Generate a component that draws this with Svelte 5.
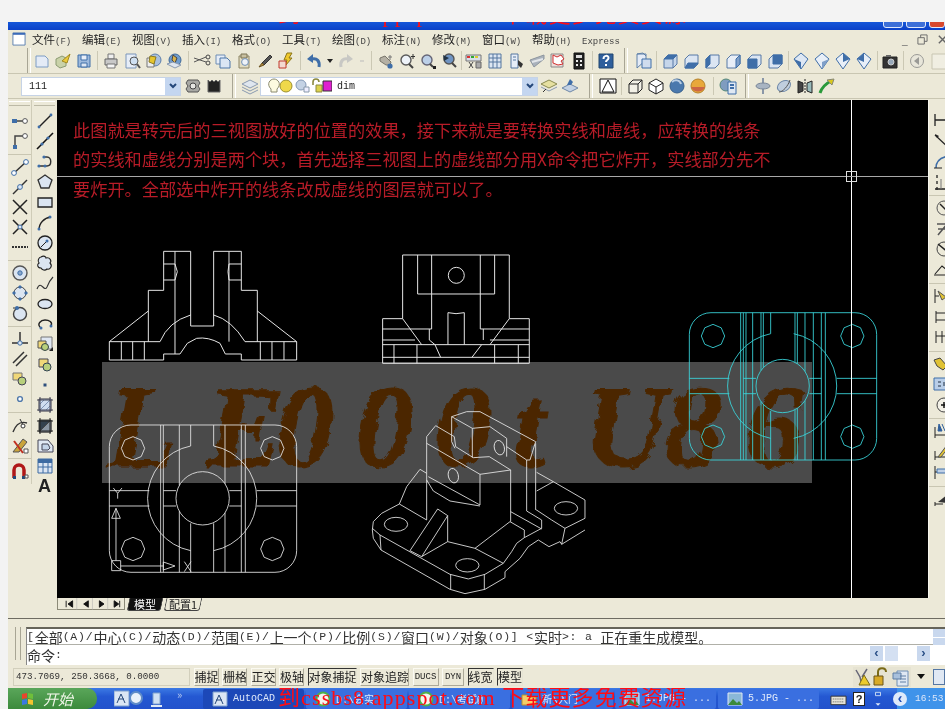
<script>
	// small toolbar glyphs, all on an 18x18 box
	const B = '#3f6ea8';
	const icons = {
		new: `<path d="M3 4h9l3 3v8H3z" fill="#e4ebf6" stroke="#7d9cc4"/>`,
		open: `<path d="M2 7l6-3 4 2v8l-6 2-4-3z" fill="#c9d2a8" stroke="#8b9a72"/><path d="M8 9l8-7-3 9z" fill="#ecc93c" stroke="#a38b22"/>`,
		save: `<path d="M3 3h12v12H3z" fill="#9db9dc" stroke="${B}"/><path d="M6 3h6v5H6z" fill="#e8eef8" stroke="${B}"/><path d="M6 11h6v4H6z" fill="#dde6f2" stroke="${B}"/>`,
		print: `<path d="M6 2h6v5H6z" fill="#eee" stroke="#777"/><path d="M3 7h12v6H3z" fill="#c8c8c8" stroke="#666"/><path d="M5 12h8v4H5z" fill="#f4f4f4" stroke="#777"/>`,
		preview: `<path d="M3 2h10v14H3z" fill="#e6edf7" stroke="#7a95ba"/><circle cx="11" cy="9" r="4" fill="#cfe0f2" stroke="#555"/><path d="M14 12l3 4" stroke="#555" stroke-width="2"/>`,
		plot: `<circle cx="11" cy="8" r="6" fill="#a9bfdc" stroke="#5d7fab"/><path d="M3 6h7v9H3z" fill="#eee" stroke="#777"/><path d="M6 4l6 1-2 7-5-2z" fill="#e6c52e" stroke="#8a7a22"/>`,
		publish: `<circle cx="10" cy="8" r="6" fill="#6f9ccc" stroke="#406a9a"/><path d="M8 3l4 3-2 5-3-3z" fill="#d9b24a"/><path d="M2 12l8 4 6-3-8-3z" fill="#dfe6ef" stroke="#8a9ab0"/>`,
		cut: `<path d="M1 6l12 4M1 10l12-5" stroke="#555"/><circle cx="15" cy="5" r="2" stroke="#444"/><circle cx="15" cy="11" r="2" stroke="#444"/>`,
		copy: `<path d="M2 3h9v9H2z" fill="#e6edf7" stroke="#6f8eb5"/><path d="M6 6h7l3 3v7H6z" fill="#dbe6f4" stroke="#4d76a8"/>`,
		paste: `<path d="M4 4h10v12H4z" fill="#e2dcc2" stroke="#8c8464"/><path d="M6 2h6v4H6z" fill="#c8c0a0" stroke="#7a7252"/><circle cx="10" cy="10" r="3.4" fill="#eef2f8" stroke="#6f8eb5"/>`,
		match: `<path d="M14 3L6 11l2 2 8-8z" fill="#555" stroke="#333"/><path d="M6 11l-3 4 5-2z" fill="#b68d3c" stroke="#6a5220"/>`,
		flash: `<path d="M10 1h5l-3 5h3l-7 8 2-6H7z" fill="#efc82c" stroke="#8a7418"/><path d="M2 9h7v7H2z" fill="#f3d9d0" stroke="#c0392b"/>`,
		undo: `<path d="M14 15c1-6-2-9-7-8" stroke="${B}" stroke-width="3"/><path d="M8 2L2 7l6 4z" fill="${B}" stroke="none"/>`,
		redo: `<path d="M4 15c-1-6 2-9 7-8" stroke="#c8c8c4" stroke-width="3"/><path d="M10 2l6 5-6 4z" fill="#c8c8c4" stroke="none"/>`,
		dd: `<path d="M6 7h6L9 11z" fill="#222" stroke="none"/>`,
		ddg: `<path d="M7 9h4" stroke="#bbb"/>`,
		pan: `<path d="M3 6l5-2 6 6-1 3H9L3 9z" fill="#b4b0a4" stroke="#77746a"/><circle cx="13" cy="14" r="2.6" fill="${B}" stroke="none"/><path d="M13 3v5M11 5h4" stroke="#777"/>`,
		zoomrt: `<circle cx="8" cy="8" r="5" fill="#eef3f9" stroke="#5a5a5a" stroke-width="1.4"/><path d="M11 12l4 4" stroke="#444" stroke-width="2"/><path d="M15 2v5M13 4.500h4" stroke="#333"/>`,
		zoomw: `<circle cx="8" cy="8" r="5" fill="#bcd0e8" stroke="#667" stroke-width="1.4"/><path d="M11 12l3 3" stroke="#444" stroke-width="2"/><path d="M14 14h3v3h-3z" fill="#222" stroke="none"/>`,
		zoomp: `<circle cx="9" cy="7" r="5" fill="#6f94c2" stroke="#555" stroke-width="1.4"/><path d="M12 11l4 4" stroke="#444" stroke-width="2"/><path d="M3 3l6 3-5 3z" fill="#234" stroke="none"/>`,
		props: `<path d="M1 3h15v6H1z" fill="#d9dfe9" stroke="#777"/><path d="M2 4h3v2H2z" fill="#d33" stroke="none"/><path d="M6 4h3v2H6z" fill="#3a3" stroke="none"/><path d="M10 4h3v2h-3z" fill="#dc3" stroke="none"/><path d="M4 10l4 6M8 10l-4 6" stroke="#444"/><path d="M11 10h5v6h-5z" fill="#aaa" stroke="#666"/>`,
		grid: `<path d="M3 2h12v14H3z" fill="#dce6f2" stroke="#55779f"/><path d="M7 2v14M11 2v14M3 6h12M3 10h12" stroke="#55779f"/>`,
		tool: `<path d="M4 2h7v14H4z" fill="#e6edf7" stroke="#55779f"/><path d="M6 5h3M6 8h3" stroke="#55779f"/><path d="M11 8l5 4-2 4-3-3z" fill="#333" stroke="none"/>`,
		sheet: `<path d="M2 8l14-5v4L6 15z" fill="#aab2bc" stroke="#8e969f"/><path d="M4 10l11-3" stroke="#e3e6ea" stroke-width="2"/>`,
		markup: `<path d="M2 2h12v13H2z" fill="#ecdcd8" stroke="#8a8a8a"/><path d="M4 3l4 2 4-2 3 4-3 2 2 3-5 1-5-2z" fill="#fff" stroke="#d03030"/>`,
		calc: `<path d="M4 1h10v16H4z" fill="#222" stroke="#111"/><path d="M6 3h6v3H6z" fill="#ddd" stroke="none"/><path d="M6 8h2v2H6zM10 8h2v2h-2zM6 12h2v2H6zM10 12h2v2h-2z" fill="#eee" stroke="none"/>`,
		help: `<path d="M2 2h14v14H2z" fill="#2f5f9c" stroke="#23476f"/><path d="M6.500 7c0-4 5-4 5-1 0 2-2.500 2-2.500 4M9 12v2" stroke="#fff" stroke-width="2"/>`,
		layout: `<path d="M3 2h9v6l-9 8z" fill="#e4ebf6" stroke="#5f80a8"/><path d="M8 7h9v9H8z" fill="#cfdcee" stroke="#3f6ea8"/><path d="M3 2l6-1 3 3" stroke="#5f80a8"/>`,
		vtop: `<path d="M3 7l4-4h9v9l-4 4H3z" fill="#c6d6ea" stroke="#5779a6"/><path d="M7 3h9L12 7H3z" fill="#3f6ea8" stroke="#3f6ea8"/><path d="M12 7v9" stroke="#5779a6"/>`,
		vbot: `<path d="M3 7l4-4h9v9l-4 4H3z" fill="#dbe5f2" stroke="#5779a6"/><path d="M3 16l3-5h10l-4 5z" fill="#3f6ea8" stroke="#3f6ea8"/>`,
		vleft: `<path d="M3 7l4-4h9v9l-4 4H3z" fill="#dbe5f2" stroke="#5779a6"/><path d="M3 7l4-4v9l-4 4z" fill="#3f6ea8" stroke="#3f6ea8"/>`,
		vright: `<path d="M3 7l4-4h9v9l-4 4H3z" fill="#e8eef7" stroke="#5779a6"/><path d="M12 7l4-4v9l-4 4z" fill="#7f9fc8" stroke="#3f6ea8"/>`,
		vfront: `<path d="M3 7l4-4h9v9l-4 4H3z" fill="#dbe5f2" stroke="#5779a6"/><path d="M3 7h9v9H3z" fill="#3f6ea8" stroke="#3f6ea8"/>`,
		vback: `<path d="M3 7l4-4h9v9l-4 4H3z" fill="#dbe5f2" stroke="#5779a6"/><path d="M7 3h9v9H7z" fill="#3f6ea8" stroke="#3f6ea8"/>`,
		dia1: `<path d="M9 1l7 6-7 10-7-10z" fill="#dde7f4" stroke="#3f6ea8"/><path d="M2 7l7 3v7z" fill="#3f6ea8" stroke="none"/>`,
		dia2: `<path d="M9 1l7 6-7 10-7-10z" fill="#e8eff8" stroke="#3f6ea8"/><path d="M16 7l-7 3v7z" fill="#7f9fc8" stroke="none"/>`,
		dia3: `<path d="M9 1l7 6-7 10-7-10z" fill="#e8eff8" stroke="#3f6ea8"/><path d="M9 1l7 6-7 3z" fill="#3f6ea8" stroke="none"/>`,
		dia4: `<path d="M9 1l7 6-7 10-7-10z" fill="#e8eff8" stroke="#3f6ea8"/><path d="M9 1l-7 6 7 3z" fill="#3f6ea8" stroke="none"/>`,
		cam: `<path d="M2 5h14v11H2z" fill="#333" stroke="#222"/><circle cx="10" cy="10" r="3" fill="#9ab" stroke="#ccc"/><path d="M5 3h5v2H5z" fill="#666" stroke="none"/>`,
		back: `<circle cx="9" cy="9" r="6.500" fill="#e8e6da" stroke="#9a9a96"/><path d="M11 5L6 9l5 4z" fill="#9a9a96" stroke="none"/>`,
		box: `<path d="M3 2h15v15H3z" fill="#f0eee2" stroke="#c8c5b2"/>`,
		ws: `<path d="M4 3h10l2 3-2 3 2 3-2 3H4l-2-3 2-3-2-3z" fill="#a8a8a4" stroke="#555"/><circle cx="9" cy="9" r="3" fill="#e6e6e2" stroke="#444"/>`,
		ws2: `<path d="M3 3l2 2 2-2 2 2 2-2 2 2 2-2v12H3z" fill="#222" stroke="#666"/>`,
		layer: `<path d="M9 3l8 4-8 4-8-4z" fill="#dfe6ef" stroke="#8a9ab0"/><path d="M1 10l8 4 8-4" stroke="#8a9ab0"/><path d="M1 13l8 4 8-4" stroke="#8a9ab0"/>`,
		layer2: `<path d="M9 3l8 4-8 4-8-4z" fill="#e6e0a0" stroke="#8a8a50"/><path d="M1 10l8 4 8-4" stroke="#8a9ab0"/><path d="M3 15l3-3" stroke="#333"/>`,
		layer3: `<path d="M9 7l8 4-8 4-8-4z" fill="#c4d2e4" stroke="#6f88a8"/><path d="M6 8l3-6 3 3-2 3z" fill="#3f6ea8" stroke="none"/>`,
		tri: `<path d="M1 2h16v14H1z" fill="#fff" stroke="#111"/><path d="M9 3L3 15h12z" fill="#fff" stroke="#111"/>`,
		cube: `<path d="M3 7l4-4h9v9l-4 4H3z" fill="#f2f0e6" stroke="#222"/><path d="M3 7h9v9M12 7l4-4" stroke="#222"/>`,
		cubeo: `<path d="M9 2l7 4v7l-7 4-7-4V6z" fill="#fff" stroke="#222"/><path d="M2 6l7 4 7-4M9 10v7" stroke="#222"/>`,
		ball: `<circle cx="9" cy="9" r="7" fill="#4a78ad" stroke="#38618e"/><path d="M4 5c3-3 8-2 9 2" stroke="#b8cde4" stroke-width="2"/>`,
		ball2: `<circle cx="9" cy="9" r="7" fill="#e8a83a" stroke="#b4812a"/><path d="M2 10c3 6 11 6 14 0" fill="#c64" stroke="none"/>`,
		render: `<circle cx="7" cy="8" r="6" fill="#7f9cbf" stroke="#587"/><path d="M9 5h8v12H9z" fill="#dfe8f3" stroke="#3f6ea8"/><path d="M11 8h4M11 11h4" stroke="#3f6ea8" stroke-width="2"/>`,
		orbit: `<path d="M9 1v16M3 9h12" stroke="#8a97a8" stroke-width="2"/><ellipse cx="9" cy="9" rx="7" ry="3" fill="#a8b4c2" stroke="#7a8798"/>`,
		orbit2: `<ellipse cx="9" cy="9" rx="7" ry="5" fill="#c0cede" stroke="#6d87a8" transform="rotate(-30 9 9)"/><path d="M4 15c4 0 9-6 11-12" stroke="#555"/>`,
		mirror: `<path d="M2 4l5 2v8l-5 2z" fill="#444" stroke="#222"/><path d="M16 4l-5 2v8l5 2z" fill="#9bb" stroke="#222"/><path d="M9 2v14" stroke="#222" stroke-dasharray="2 1"/>`,
		walk: `<path d="M3 16c2-6 5-9 11-12" stroke="#2a9a3a" stroke-width="3"/><path d="M10 3l7-1-2 6z" fill="#d8c820" stroke="#887"/>`,

		// snap column
		line1: `<path d="M2 9h12" stroke="#444" stroke-width="1.500"/><path d="M1 7h5v4H1z" fill="${B}" stroke="none"/><circle cx="14" cy="9" r="2.400" fill="#fff" stroke="#555"/>`,
		corner: `<path d="M4 14V4h9" stroke="#444" stroke-width="1.500"/><path d="M2 13h4v4H2z" fill="${B}" stroke="none"/><circle cx="14" cy="4" r="2.400" fill="#fff" stroke="#555"/>`,
		seg: `<path d="M3 15L15 4" stroke="#333" stroke-width="1.500"/><circle cx="3" cy="15" r="2.400" fill="#fff" stroke="${B}"/><circle cx="15" cy="4" r="2.400" fill="#fff" stroke="${B}"/>`,
		seg2: `<path d="M2 16L16 2" stroke="#333" stroke-width="1.500"/><circle cx="9" cy="9" r="2.400" fill="#dde6f2" stroke="${B}"/>`,
		cross: `<path d="M2 2l14 14M16 2L2 16" stroke="#222" stroke-width="1.500"/>`,
		cross2: `<path d="M2 2l14 14M16 2L2 16" stroke="#222" stroke-width="1.500"/><circle cx="9" cy="9" r="2" fill="#dde6f2" stroke="${B}"/>`,
		dash: `<path d="M1 9h16" stroke="#333" stroke-width="2" stroke-dasharray="2 1"/>`,
		ring: `<circle cx="9" cy="9" r="7" fill="#dbe5f1" stroke="#555" stroke-width="1.400"/><circle cx="9" cy="9" r="2.200" fill="#8aa8cc" stroke="${B}"/>`,
		quad: `<circle cx="9" cy="9" r="6" fill="#dbe5f1" stroke="#444"/><path d="M9 1l2 2-2 2-2-2zM9 13l2 2-2 2-2-2zM1 9l2-2 2 2-2 2zM13 9l2-2 2 2-2 2z" fill="${B}" stroke="none"/>`,
		tan: `<circle cx="9" cy="10" r="6.500" fill="#dbe5f1" stroke="#444" stroke-width="1.400"/><path d="M2 4h6" stroke="#333"/><circle cx="6" cy="4" r="2" fill="${B}" stroke="none"/>`,
		perp: `<path d="M1 13h16M9 2v11" stroke="#333" stroke-width="1.500"/><circle cx="9" cy="13" r="2.200" fill="#dbe5f1" stroke="${B}"/>`,
		para: `<path d="M2 13L13 2M5 16L16 5" stroke="#333" stroke-width="1.500"/>`,
		blk: `<path d="M2 3h9v7H2z" fill="#f0d878" stroke="#777"/><circle cx="11" cy="11" r="4" fill="#b8d07c" stroke="#445"/>`,
		pt: `<circle cx="9" cy="9" r="2.400" fill="#fff" stroke="#4f78aa" stroke-width="1.400"/>`,
		near: `<path d="M2 16c3-8 8-11 14-9" stroke="#333" stroke-width="1.400"/><path d="M9 3l4 8" stroke="#333"/><circle cx="12" cy="10" r="2" fill="#fff" stroke="#333"/>`,
		none: `<path d="M2 16L12 3l4 3-8 10z" fill="#c9a43c" stroke="#555"/><path d="M3 5l9 12" stroke="#c03020" stroke-width="2"/><path d="M13 13h4v4h-4z" fill="#fff" stroke="#555"/>`,
		mag: `<path d="M3 16V8a5 5 0 0 1 10 0v8" stroke="#b01818" stroke-width="3.500"/><path d="M2 14h3v3H2zM11 14h3v3h-3z" fill="#234a7a" stroke="none"/><path d="M14 13h3v3h-3z" fill="#fff" stroke="#555"/>`,

		// draw column
		lin: `<path d="M3 15L15 3" stroke="#222" stroke-width="1.400"/><circle cx="3" cy="15" r="1.400" fill="${B}" stroke="none"/><circle cx="15" cy="3" r="1.400" fill="${B}" stroke="none"/>`,
		xlin: `<path d="M1 17L17 1" stroke="#111" stroke-width="1.600"/><circle cx="6" cy="12" r="1.600" fill="${B}" stroke="none"/><circle cx="12" cy="6" r="1.600" fill="${B}" stroke="none"/>`,
		pline: `<path d="M2 13h9c5 0 5-9 0-9H8" stroke="#333" stroke-width="1.400"/><circle cx="3" cy="13" r="1.600" fill="${B}" stroke="none"/><circle cx="9" cy="13" r="1.600" fill="${B}" stroke="none"/><circle cx="8" cy="4" r="1.600" fill="${B}" stroke="none"/>`,
		pgon: `<path d="M9 2l7 5-3 8H5L2 7z" fill="#dbe5f1" stroke="#333" stroke-width="1.300"/>`,
		rect: `<path d="M2 5h14v9H2z" fill="#dbe5f1" stroke="#222" stroke-width="1.300"/>`,
		arc: `<path d="M3 16C3 9 8 4 15 3" stroke="#222" stroke-width="1.400"/><circle cx="3" cy="15" r="1.500" fill="${B}" stroke="none"/><circle cx="14" cy="3" r="1.500" fill="${B}" stroke="none"/>`,
		circ: `<circle cx="9" cy="9" r="7" fill="#dbe5f1" stroke="#222" stroke-width="1.300"/><path d="M5 13l5-5" stroke="#222"/><circle cx="11" cy="7" r="1.500" fill="${B}" stroke="none"/>`,
		cloud: `<path d="M5 3c3-2 5 0 5 1 4-1 6 3 4 5 3 3 0 7-3 6-2 2-5 1-6-1-4 0-4-4-2-5-2-2 0-6 2-6z" fill="#dbe5f1" stroke="#222" stroke-width="1.100"/>`,
		spline: `<path d="M1 14c4-10 7 4 10-2 2-5 4-8 6-10" stroke="#333" stroke-width="1.100"/>`,
		ell: `<ellipse cx="9" cy="9" rx="7" ry="4.500" fill="#dbe5f1" stroke="#222" stroke-width="1.300"/>`,
		ella: `<path d="M5 13C0 9 5 5 9 5s8 2 6 6" stroke="#222" stroke-width="1.400"/><circle cx="5" cy="13" r="1.500" fill="${B}" stroke="none"/><circle cx="15" cy="11" r="1.500" fill="${B}" stroke="none"/>`,
		ins: `<path d="M5 2h11v12H5z" fill="#dfe7f2" stroke="#777"/><path d="M2 6h8v7H2z" fill="#f0d878" stroke="#555"/><circle cx="9" cy="12" r="3.500" fill="#b8d07c" stroke="#344"/><path d="M13 16l4-4v4z" fill="#222" stroke="none"/>`,
		mk: `<path d="M3 3h9v8H3z" fill="#f0d878" stroke="#445"/><circle cx="11" cy="11" r="4" fill="#b8d07c" stroke="#345"/>`,
		dot: `<path d="M7.500 7.500h3v3h-3z" fill="#2e4f7c" stroke="none"/>`,
		hatch: `<path d="M3 3h12v12H3z" fill="#cfdcef" stroke="#334"/><path d="M3 9l6-6M3 15L15 3M9 15l6-6" stroke="#7f93b4"/><path d="M1 4h16M1 14h16M4 1v16M14 1v16" stroke="#445"/>`,
		grad: `<path d="M3 3h12v12H3z" fill="#33414f"/><path d="M3 15L15 3v12z" fill="#8a96a4"/><path d="M1 4h16M1 14h16M4 1v16M14 1v16" stroke="#222"/>`,
		region: `<path d="M2 3h10l5 6v6H2z" fill="#e0e8f3" stroke="#445"/><path d="M6 7h6l2 4-2 2H6z" fill="#c4d4e8" stroke="#445"/>`,
		table: `<path d="M2 2h14v14H2z" fill="#dbe5f3" stroke="#3d6aa2"/><path d="M2 2h14v4H2z" fill="#3d6aa2" stroke="none"/><path d="M2 10h14M7 6v10M12 6v10" stroke="#3d6aa2"/>`,

		// dimension column
		d1: `<path d="M2 3v12M2 9h16" stroke="#222" stroke-width="1.300"/>`,
		d2: `<path d="M2 3l14 13" stroke="#222" stroke-width="1.300"/><path d="M2 2l4 2-2 2zM14 12l3 4-4-1z" fill="#222" stroke="none"/>`,
		d3: `<path d="M3 16C3 9 8 5 16 4" stroke="#3f6ea8" stroke-width="1.600"/><path d="M1 16h8" stroke="#222"/>`,
		d4: `<path d="M4 2v3M4 8v3M4 14v3M2 16h10" stroke="#222" stroke-width="1.300"/><path d="M8 6v10" stroke="#777"/>`,
		d5: `<circle cx="11" cy="9" r="7" stroke="#555"/><path d="M7 5l8 8" stroke="#222" stroke-width="1.500"/>`,
		d6: `<path d="M4 4h10l-9 11M5 9h7" stroke="#555" stroke-width="1.500"/>`,
		d7: `<circle cx="11" cy="9" r="7" stroke="#444"/><path d="M5 4l12 10" stroke="#222" stroke-width="1.500"/>`,
		d8: `<path d="M1 14h16M2 13L9 5l7 6" stroke="#222" stroke-width="1.100"/>`,
		d9: `<path d="M2 2v14M2 9h4" stroke="#222"/><path d="M5 4l8 6-4 3z" fill="#e0c235" stroke="#555"/>`,
		d10: `<path d="M3 3v12M14 3v12M3 5h11M3 12h11" stroke="#222"/>`,
		d11: `<path d="M3 3v12M9 3v12M15 3v12M3 8h14" stroke="#222"/>`,
		d12: `<path d="M1 5l6-2 7 8-4 4-6-4z" fill="#e0c235" stroke="#444"/>`,
		d13: `<path d="M1 3h16v12H1z" fill="#b9cee8" stroke="#3f6ea8"/><path d="M5 7h3M5 11h3M11 7v4" stroke="#234"/>`,
		d14: `<circle cx="11" cy="9" r="7" fill="#f2f0e6" stroke="#444"/><path d="M11 6v6M8 9h6" stroke="#111" stroke-width="1.500"/>`,
		d15: `<path d="M2 5v11M2 13h12" stroke="#222"/><path d="M6 2l3 7H5zM9 2l3 7" stroke="#2f5f9c" fill="#2f5f9c"/>`,
		d16: `<path d="M2 8v9M2 14h12" stroke="#222"/><path d="M5 14L14 2l2 2-8 10z" fill="#e0c235" stroke="#555"/>`,
		d17: `<path d="M2 3v13M2 9h16" stroke="#222"/><path d="M4 6h13v4H4z" fill="#bfd0e6" stroke="#3f6ea8"/>`,
		d18: `<path d="M2 12v4M2 14h8" stroke="#222"/><path d="M5 12l9-7v8z" fill="#333" stroke="none"/>`
	};

	const tb1 = ['s:g8','new','open','save','s:s6','print','preview','plot','publish','s:s7','cut','copy','paste','match','flash','s:s7','undo','dd','redo','ddg','s:s8','pan','zoomrt','zoomw','zoomp','s:s4','props','grid','tool','sheet','markup','calc','s:s6','help','s:g16','layout','s:s6','vtop','vbot','vleft','vright','vfront','vback','s:s5','dia1','dia2','dia3','dia4','s:s5','cam','s:s6','back','box'];
	const tb2a = ['s:g15','layer'];
	const tb2b = ['layer2','layer3','s:g17','tri','s:s6','cube','cubeo','ball','ball2','s:s9','render','s:g14','orbit','orbit2','mirror','walk'];
	const snapBar = [['line1','corner'],['seg','seg2','cross','cross2','dash'],['ring','quad','tan'],['perp','para','blk','pt'],['near','none'],['mag']];
	const drawBar = ['lin','xlin','pline','pgon','rect','arc','circ','cloud','spline','ell','ella','ins','mk','dot','hatch','grad','region','table'];
	const dimBar = [['d1','d2','d3','d4'],['d5','d6','d7','d8'],['d9','d10','d11'],['d12','d13','d14'],['d15','d16','d17'],['d18']];

	const menus = ['文件(F)','编辑(E)','视图(V)','插入(I)','格式(O)','工具(T)','绘图(D)','标注(N)','修改(M)','窗口(W)','帮助(H)','Express'];
	const statusBtns = [
		['捕捉',false,'w24'],['栅格',false,'w24'],['正交',false,'w24'],['极轴',false,'w24'],
		['对象捕捉',true,'w48'],['对象追踪',false,'w48'],['DUCS',false,'w26 latin'],['DYN',false,'w22 latin'],
		['线宽',true,'w26'],['模型',true,'w26']
	];
	const taskBtns = [
		['AutoCAD .','cad','on'],['D:\\会实','globe',''],['D:\\考试@','globe',''],
		['新\\入门','folder',''],['1.JPG - ...','pic',''],['5.JPG - ...','pic','']
	];

	// CJK and latin text run at different sizes in the old UI
	function runs(s) {
		return s.match(/[\u3000-\u9fff]+|[^\u3000-\u9fff]+/g);
	}

	function hole(cx, cy) {
		const pts = [];
		for (let i = 0; i < 8; i++) {
			const a = Math.PI * 2 * i / 8 - Math.PI / 2;
			pts.push((cx + 35 * Math.cos(a)).toFixed(1) + ',' + (cy + 35 * Math.sin(a)).toFixed(1));
		}
		return pts.join(' ');
	}

	// vertical lines of the plan view stop at the bore
	function planLine(x) {
		if (x === 272 || x === 341) return `M${x} 195V258M${x} 490V637`;
		const off = Math.abs(x - 308);
		if (off >= 80) return `M${x} 195V637`;
		const dy = Math.sqrt(6400 - off * off);
		return `M${x} 195V${(415 - dy).toFixed(1)}M${x} ${(415 + dy).toFixed(1)}V637`;
	}

	const whiteLines = [182, 190, 238, 272, 341, 375, 424, 436];
	const cyanLines = [182, 190, 198, 218, 243, 250, 272, 345, 352, 375, 400, 424, 436];
</script>

{#snippet icon(name)}
	<svg class="ic" viewBox="0 0 18 18" aria-hidden="true">{@html icons[name]}</svg>
{/snippet}

{#snippet strip(items)}
	{#each items as it}
		{#if it.startsWith('s:')}
			<div class="sep {it.slice(2)}"></div>
		{:else}
			<div class="cell {it === 'dd' || it === 'ddg' ? 'thin' : ''}">{@render icon(it)}</div>
		{/if}
	{/each}
{/snippet}

{#snippet mixed(text)}
	{#each runs(text) as r}
		<span class={/[\u3000-\u9fff]/.test(r) ? 'zh' : 'en'}>{r}</span>
	{/each}
{/snippet}

{#snippet plan(lines)}
	<path d="M93 195H525A65 65 0 0 1 590 260V572A65 65 0 0 1 525 637H93A65 65 0 0 1 28 572V260A65 65 0 0 1 93 195Z" />
	<path d="M341 258A160 160 0 0 1 341 572M272 572A160 160 0 0 1 272 258" />
	<circle cx="308" cy="415" r="80" />
	<path d="M28 392H148M28 438H148M190 392H228M190 438H228M388 392H424M388 438H424M470 392H590M470 438H590" />
	{#each lines as x}
		<path d={planLine(x)} />
	{/each}
	<polygon points={hole(99, 265)} />
	<polygon points={hole(517, 265)} />
	<polygon points={hole(99, 567)} />
	<polygon points={hole(517, 567)} />
{/snippet}

<div class="page">
	<div class="title">
		<div class="promo top">到cssbs8.appspot.com 下载更多免费资源</div>
		<div class="tbtns"><i></i><i></i><i class="red"></i></div>
	</div>

	<div class="menu">
		<svg class="docico" viewBox="0 0 15 15" aria-hidden="true"><path d="M1 1h13v13H1z" fill="#fff" stroke="#5a7fb0"/><path d="M1 1h13v2H1z" fill="#3a6ab8"/></svg>
		{#each menus as m}
			<div class="mi">{@render mixed(m)}</div>
		{/each}
		<div class="winbtns">
			<span>_</span>
			<svg viewBox="0 0 12 12" aria-hidden="true"><path d="M1 4h7v7H1zM4 4V1h7v7H8" fill="none" stroke="#666"/></svg>
			<svg viewBox="0 0 12 12" aria-hidden="true"><path d="M2 2l8 8M10 2l-8 8" fill="none" stroke="#666" stroke-width="1.500"/></svg>
		</div>
	</div>

	<div class="bar tb1">{@render strip(tb1)}</div>

	<div class="bar tb2">
		<div class="combo c1">
			<span>111</span>
			<div class="drop"><svg viewBox="0 0 10 10" aria-hidden="true"><path d="M2 3l3 3 3-3" fill="none" stroke="#24477a" stroke-width="2"/></svg></div>
		</div>
		<div class="cell">{@render icon('ws')}</div>
		<div class="cell">{@render icon('ws2')}</div>
		{@render strip(tb2a)}
		<div class="combo c2">
			<svg class="lay" viewBox="0 0 66 18" aria-hidden="true">
				<path d="M5 12c-5-5-1-10 3-10s8 5 3 10v3H5z" fill="#fdfbe0" stroke="#8a8a70"/>
				<circle cx="20" cy="9" r="6" fill="#efd84a" stroke="#9c9030"/>
				<circle cx="35" cy="8" r="5" fill="#c4d2e4" stroke="#8398b6"/>
				<path d="M38 10h5v5h-5z" fill="#eef" stroke="#89a"/>
				<path d="M47 8V5c0-4 6-4 6 0" fill="none" stroke="#8c8a40" stroke-width="1.600"/>
				<path d="M50 8h6v7h-6z" fill="#dcd24c" stroke="#8c8a40"/>
				<path d="M57 4h9v10h-9z" fill="#e020d0" stroke="#333"/>
			</svg>
			<span class="dim">dim</span>
			<div class="drop"><svg viewBox="0 0 10 10" aria-hidden="true"><path d="M2 3l3 3 3-3" fill="none" stroke="#24477a" stroke-width="2"/></svg></div>
		</div>
		{@render strip(tb2b)}
	</div>

	<div class="work">
		<div class="side">
			<div class="col snap">
				<div class="grip"></div>
				{#each snapBar as group, i}
					{#if i > 0}<div class="hsep"></div>{/if}
					{#each group as n}
						<div class="vcell">{@render icon(n)}</div>
					{/each}
				{/each}
			</div>
			<div class="col draw">
				<div class="grip"></div>
				{#each drawBar as n}
					<div class="vcell d">{@render icon(n)}</div>
				{/each}
				<div class="vcell d big">A</div>
			</div>
		</div>

		<svg class="canvas" viewBox="57 100 871 498" aria-label="drawing">
			<defs>
				<filter id="flame" x="-5%" y="-10%" width="110%" height="120%">
					<feTurbulence type="fractalNoise" baseFrequency="0.09" numOctaves="2" seed="4" />
					<feDisplacementMap in="SourceGraphic" scale="9" />
				</filter>
			</defs>

			<text class="note" x="73" y="137">此图就是转完后的三视图放好的位置的效果，接下来就是要转换实线和虚线，应转换的线条</text>
			<text class="note" x="73" y="166">的实线和虚线分别是两个块，首先选择三视图上的虚线部分用X命令把它炸开，实线部分先不</text>
			<text class="note" x="73" y="196">要炸开。全部选中炸开的线条改成虚线的图层就可以了。</text>

			<rect class="wm" x="102" y="362" width="710" height="121" />
			<text class="wmtext" filter="url(#flame)" x="106 206 276 356 434 513 584 664 745" y="466">LE000tU86</text>

			<g class="cad" transform="translate(100 240) scale(.3333)">
				<path d="M28 360V305L145 213V151H191V34H272V258H341V34H424V151H472V213L590 305V360H424V342H376L360 310Q325 290 290 295L262 310L240 342H191V360H28" />
				<path d="M28 305H180M435 305H590M145 213V305M472 213V305M64 305V360M98 305V360M133 305V360M481 305V360M516 305V360M552 305V360" />
				<path d="M225 34V342M387 34V305M191 72H225M191 120H225M387 72H424M387 120H424M225 72L232 95L225 120M387 72L384 95L387 120" />
				<path d="M180 305Q205 245 272 225M341 225Q395 240 435 305" />
				<path d="M908 236V45H1228V236H1288V370H848V236H908" />
				<path d="M953 45V162H1184V45M995 45V267M1141 45V267M848 267H995M1141 267H1288M848 300H945M1170 300H1288M848 314H1288M848 352H1288" />
				<path d="M988 267V300M1150 267V300M908 236L965 314M1228 236L1170 314M988 300L1005 314L1022 352M1116 352L1145 314" />
				<path d="M1044 314V218Q1068 224 1093 218V314M882 314V370M951 314V370M1184 314V370M1255 314V370" />
				<circle cx="1069" cy="106" r="24" />
			</g>

			<g class="cad thin" transform="translate(100 360) scale(.3333)">
				{@render plan(whiteLines)}
				<path d="M48 602V445M35 475L48 445L61 475ZM62 618H190M190 606L225 618L190 630ZM35 602H62V632H35ZM40 384L53 400L66 384M53 400V416M253 605L273 635M273 605L253 635" />
			</g>

			<!-- isometric view -->
			<g class="cad thin" transform="translate(365 405) scale(.3333)">
				<path d="M103 297L50 325L25 350L22 375L25 400L48 435L255 553L300 566L360 553L420 518V500L465 460L490 425L520 405L552 425L585 410L590 418L660 375" />
				<path d="M22 370L45 390L255 508L310 522L360 508L415 475L440 440L455 415L478 398" />
				<path d="M45 390L48 435M257 508V553M358 508V553M103 297L185 345" />
				<ellipse cx="93" cy="358" rx="35" ry="21" />
				<ellipse cx="307" cy="481" rx="35" ry="20" />
				<ellipse cx="603" cy="310" rx="35" ry="20" />
				<path d="M135 437L218 312L248 332L170 455L135 437M248 332V410M170 455L248 410L330 430L415 475M330 430L435 350L478 375V398L530 370V345L485 318M437 320L530 372" />
				<path d="M185 345V95L212 62L268 95L272 125L325 158L373 155L437 195V350M185 115L345 208V300M345 208L437 195M185 225L205 258L255 288L345 303M190 215L345 300" />
				<path d="M260 35L322 70V158M260 35V110L270 130M260 35L305 20H345L512 110L495 165H485M322 70L375 65L425 100V155M425 125L485 165V318M512 115V312" />
				<ellipse cx="265" cy="212" rx="15" ry="22" transform="rotate(-15 265 212)" />
				<ellipse cx="403" cy="128" rx="15" ry="22" transform="rotate(-15 403 128)" />
				<path d="M515 202L565 230L660 285V340M515 258L565 230M510 312L560 345L600 370L660 340M600 370L590 418M103 297L125 245L165 193L185 205" />
			</g>

			<g class="cad thin cyan" transform="translate(680 247.700) scale(.3333)">
				{@render plan(cyanLines)}
			</g>

			<path class="cross" d="M851.500 100V598" />
			<path class="crossh" d="M57 176.500H928" />
			<rect class="pick" x="846.500" y="171.500" width="10" height="10" />
		</svg>

		<div class="rbar">
			{#each dimBar as group, i}
				{#if i > 0}<div class="hsep"></div>{/if}
				{#each group as n}
					<div class="rcell">{@render icon(n)}</div>
				{/each}
			{/each}
		</div>
	</div>

	<div class="tabs">
		<div class="nav">
			<svg viewBox="0 0 68 13" aria-hidden="true">
				<path d="M6 3v7M13 3L8 6.500l5 3.500zM30 3l-5 3.500 5 3.500zM42 3l5 3.500-5 3.500zM58 3l5 3.500-5 3.500zM64 3v7" fill="#111" stroke="#111" />
				<path d="M17.500 0v13M34.500 0v13M51 0v13" stroke="#aaa8" />
			</svg>
		</div>
		<div class="tab on">模型</div>
		<div class="tab">配置1</div>
	</div>

	<div class="split"></div>

	<div class="cmd">
		<div class="cgrip"></div>
		<div class="cbox">
			<div class="cline hist">
				{@render mixed('[全部(A)/中心(C)/动态(D)/范围(E)/上一个(P)/比例(S)/窗口(W)/对象(O)] <实时>: a 正在重生成模型。')}
				<div class="vscroll"><i></i><i></i></div>
			</div>
			<div class="cline prompt">
				{@render mixed('命令:')}
				<div class="hscroll">
					<i>‹</i><b></b><em></em><i>›</i>
				</div>
			</div>
		</div>
	</div>

	<div class="status">
		<div class="coords">473.7069, 250.3668, 0.0000</div>
		{#each statusBtns as [label, pressed, w]}
			<div class="sb {w}" class:pressed>{label}</div>
		{/each}
		<div class="tray">
			<svg viewBox="0 0 58 20" aria-hidden="true">
				<path d="M3 3l4 7 2 8M14 2l-5 8" fill="none" stroke="#667" stroke-width="1.500"/>
				<path d="M11 8l6 10H6z" fill="#eccb2c" stroke="#7a6a18"/>
				<path d="M25 9V5c0-5 8-5 8 0" fill="none" stroke="#7a6a18" stroke-width="2"/>
				<path d="M21 9h9v9h-9z" fill="#d8aa28" stroke="#6a5418"/>
				<path d="M44 4h11v15H44z" fill="#dfe8f3" stroke="#6f8eb5"/>
				<path d="M40 6h8v6h-8z" fill="#a8c0dc" stroke="#5f7ea5"/>
				<path d="M47 9h6M47 12h6M47 15h6" stroke="#5f7ea5"/>
			</svg>
			<span class="tri"></span>
			<span class="sq"></span>
		</div>
	</div>

	<div class="taskbar">
		<div class="start">
			<svg viewBox="0 0 16 16" aria-hidden="true">
				<path d="M2 3l5-1v5l-5 1z" fill="#e8452c"/><path d="M8 2l5 1v5l-5-1z" fill="#6fbf3a"/>
				<path d="M2 9l5-1v5l-5 1z" fill="#3a78e0"/><path d="M8 8l5 1v5l-5-1z" fill="#f4c430"/>
			</svg>
			<span>开始</span>
		</div>
		<div class="quick">
			<svg viewBox="0 0 48 18" aria-hidden="true">
				<path d="M0 1h15v15H0z" fill="#dbe6f4" stroke="#7ea0cc"/><path d="M3 13l4-9 4 9M4 9h6" fill="none" stroke="#24477a"/>
				<circle cx="22" cy="8" r="6" fill="#eaf1fa" stroke="#5f8cc8" stroke-width="2"/>
				<path d="M39 3h7v11h-7z" fill="#cfe0f4" stroke="#7ea0cc"/><path d="M37 15h11v2H37z" fill="#dfe9f6"/>
			</svg>
		</div>
		<div class="more">»</div>
		{#each taskBtns as [label, kind, on]}
			<div class="task {on}">
				{#if kind === 'cad'}
					<svg viewBox="0 0 16 16" aria-hidden="true"><path d="M1 1h14v14H1z" fill="#dbe6f4" stroke="#7ea0cc"/><path d="M3 13l4-9 4 9M4 9h6" fill="none" stroke="#24477a"/></svg>
				{:else if kind === 'globe'}
					<svg viewBox="0 0 16 16" aria-hidden="true"><circle cx="8" cy="8" r="6.500" fill="#f2f4ee" stroke="#4fae4a" stroke-width="2"/></svg>
				{:else if kind === 'folder'}
					<svg viewBox="0 0 16 16" aria-hidden="true"><path d="M1 4h5l2 2h7v8H1z" fill="#f2ce6a" stroke="#b78f2c"/></svg>
				{:else}
					<svg viewBox="0 0 16 16" aria-hidden="true"><path d="M1 2h14v12H1z" fill="#8ab8d8" stroke="#dfe8f3"/><path d="M1 14l5-6 4 4 2-2 3 4z" fill="#3c8a3c"/></svg>
				{/if}
				<span>{label}</span>
			</div>
		{/each}
		<div class="systray">
			<svg class="kb" viewBox="0 0 18 14" aria-hidden="true"><path d="M1 4h16v9H1z" fill="#e4e2d6" stroke="#333"/><path d="M3 7h12M3 10h12" stroke="#555" stroke-dasharray="1 1"/></svg>
			<div class="hlp">?</div>
			<svg class="two" viewBox="0 0 12 20" aria-hidden="true"><path d="M3 2h6v4H3z" fill="none" stroke="#dfe9f8"/><path d="M3 15h6l-3 3z" fill="#dfe9f8"/></svg>
			<div class="clock">
				<div class="chev">‹</div>
				<span>16:53</span>
			</div>
		</div>
		<div class="promo bottom">到cssbs8.appspot.com 下载更多免费资源</div>
	</div>
</div>

<style>
	:global(body) {
		margin: 0;
		background: #f3f3f3;
	}

	.page {
		width: 945px;
		height: 709px;
		box-sizing: border-box;
		padding: 22px 0 0 8px;
		display: flex;
		flex-direction: column;
		overflow: hidden;
		background: #f3f3f3;
		font-family: "Noto Sans CJK SC", "Liberation Sans", sans-serif;
		color: #222;
		filter: blur(0.35px);
	}

	/* title bar, mostly cropped away in the shot */
	.title {
		position: relative;
		height: 8px;
		flex: none;
		background: linear-gradient(#1456d8, #0a40c8);
		overflow: hidden;
	}

	.promo {
		position: absolute;
		left: 270px;
		white-space: nowrap;
		font: 22px/22px "Liberation Serif", "Noto Sans CJK SC", serif;
		letter-spacing: 1.1px;
		color: #ff0c14;
	}

	.promo.top {
		bottom: 4px;
	}

	.promo.bottom {
		top: -1px;
	}

	.tbtns {
		position: absolute;
		right: 0;
		top: -12px;
		display: flex;
		gap: 3px;
	}

	.tbtns i {
		width: 18px;
		height: 16px;
		background: #3c6fd8;
		border: 1px solid #dfe8fa;
		border-radius: 3px;
	}

	.tbtns i.red {
		width: 14px;
		background: #d8482c;
	}

	.menu {
		height: 18px;
		flex: none;
		display: flex;
		align-items: center;
		padding-left: 4px;
		background: #ece9d8;
	}

	.docico {
		width: 14px;
		height: 14px;
		margin-right: 6px;
	}

	.mi {
		flex: 0 0 50px;
		white-space: nowrap;
		font-size: 11.5px;
		line-height: 16px;
	}

	.mi .en {
		font: 9px "Liberation Mono", monospace;
		color: #444;
	}

	.winbtns {
		margin-left: auto;
		display: flex;
		align-items: center;
		gap: 9px;
		margin-right: -3px;
		color: #666;
		font-size: 11px;
	}

	.winbtns svg {
		width: 11px;
		height: 11px;
	}

	.bar {
		flex: none;
		display: flex;
		align-items: center;
		background: #ece9d8;
		border-bottom: 1px solid #c9c6b2;
		box-sizing: border-box;
	}

	.tb1 {
		height: 26px;
		padding-left: 15px;
	}

	.tb2 {
		height: 25px;
		padding-left: 13px;
	}

	.cell {
		flex: 0 0 21px;
		min-width: 0;
		height: 22px;
		display: flex;
		align-items: center;
		justify-content: center;
	}

	.cell.thin {
		flex-basis: 11px;
	}

	.ic {
		width: 18px;
		height: 18px;
		flex: none;
		fill: none;
		stroke: #444;
	}

	.sep {
		align-self: stretch;
		position: relative;
		flex: none;
	}

	.sep::after {
		content: "";
		position: absolute;
		left: 50%;
		top: 3px;
		bottom: 3px;
		border-left: 1px solid #cbc8b4;
	}

	.s4 { width: 4px; }
	.s5 { width: 5px; }
	.s6 { width: 6px; }
	.s7 { width: 7px; }
	.s8 { width: 8px; }
	.s9 { width: 9px; }
	.g8 { width: 8px; }
	.g14 { width: 14px; }
	.g15 { width: 15px; }
	.g16 { width: 16px; }
	.g17 { width: 17px; }

	.g8::after,
	.g14::after,
	.g15::after,
	.g16::after,
	.g17::after {
		width: 2px;
		top: 0;
		bottom: 0;
		border-left: 1px solid #a8a594;
		border-right: 1px solid #fff;
	}

	.combo {
		height: 19px;
		flex: none;
		display: flex;
		align-items: center;
		box-sizing: border-box;
		background: #fff;
		border: 1px solid #c6d3e6;
		font: 10px "Liberation Mono", monospace;
		position: relative;
	}

	.c1 {
		width: 160px;
		padding-left: 7px;
		margin-right: 1px;
	}

	.c2 {
		width: 278px;
		padding-left: 5px;
	}

	.lay {
		width: 66px;
		height: 18px;
		flex: none;
	}

	.dim {
		margin-left: 5px;
	}

	.drop {
		position: absolute;
		right: 0;
		top: 0;
		bottom: 0;
		width: 15px;
		display: flex;
		align-items: center;
		justify-content: center;
		background: #c4d6f0;
	}

	.drop svg {
		width: 10px;
		height: 10px;
	}

	.work {
		flex: none;
		height: 499px;
		padding-top: 1px;
		box-sizing: border-box;
		display: flex;
		background: #ece9d8;
	}

	.side {
		flex: 0 0 49px;
		display: flex;
		gap: 1px;
		box-sizing: border-box;
	}

	.col {
		width: 23px;
		display: flex;
		flex-direction: column;
		align-items: center;
	}

	.snap {
		height: 384px;
		border-right: 1px solid #cfccb8;
	}

	.grip {
		align-self: stretch;
		height: 5px;
		flex: none;
		margin: 1px 1px 5px;
		border-top: 1px solid #fff;
		border-bottom: 1px solid #bcb9a6;
		box-sizing: border-box;
	}

	.vcell {
		height: 20px;
		flex: none;
		display: flex;
		align-items: center;
		justify-content: center;
	}

	.vcell.d {
		height: 20.300px;
	}

	.big {
		font: bold 18px "Liberation Sans", sans-serif;
		color: #222;
	}

	.hsep {
		flex: 0 0 6px;
		align-self: stretch;
		position: relative;
	}

	.hsep::after {
		content: "";
		position: absolute;
		left: 0;
		right: 0;
		top: 3px;
		border-top: 1px solid #c9c6b2;
	}

	.canvas {
		flex: 0 0 871px;
		width: 871px;
		height: 498px;
		display: block;
		background: #000;
	}

	.note {
		font-family: "Noto Sans CJK SC", sans-serif;
		font-size: 17.200px;
		fill: #b81c28;
	}

	.wm {
		fill: #4a4a4a;
	}

	.wmtext {
		font: italic bold 116px "Liberation Serif", serif;
		fill: #4c2702;
		stroke: #4c2702;
		stroke-width: 1px;
	}

	.cad {
		fill: none;
		stroke: #e6e6e6;
		stroke-width: 3;
	}

	.cad.thin {
		stroke-width: 2.600;
	}

	.cad.cyan {
		stroke: #3ad6dc;
	}

	.cross {
		stroke: #fff;
		stroke-width: 1;
	}

	.crossh {
		stroke: #a8a8a8;
		stroke-width: 1;
	}

	.pick {
		fill: none;
		stroke: #ddd;
	}

	.rbar {
		flex: 1;
		min-width: 0;
		overflow: hidden;
		padding-top: 10px;
		display: flex;
		flex-direction: column;
		border-left: 1px solid #f7f6ee;
		box-sizing: border-box;
	}

	.rcell {
		height: 20.500px;
		flex: none;
		padding-left: 4px;
		display: flex;
		align-items: center;
	}

	.tabs {
		flex: none;
		height: 14px;
		display: flex;
		padding-left: 49px;
		background: #ece9d8;
	}

	.nav {
		width: 68px;
		height: 12px;
		border: 1px solid #8c8a78;
		border-top: none;
		box-sizing: border-box;
	}

	.nav svg {
		display: block;
		width: 68px;
		height: 12px;
	}

	.tab {
		position: relative;
		height: 13px;
		margin-left: 3px;
		padding: 0 4px;
		font-size: 11px;
		line-height: 12px;
		z-index: 0;
		color: #222;
	}

	.tab::before {
		content: "";
		position: absolute;
		inset: 0;
		z-index: -1;
		border: 1px solid #444;
		border-top: none;
		border-radius: 0 0 3px 3px;
		transform: skewX(-12deg);
	}

	.tab.on {
		color: #fff;
		padding: 0 6px;
	}

	.tab.on::before {
		background: #111;
	}

	.split {
		flex: none;
		height: 15px;
		background: #ece9d8 linear-gradient(#6e6c62, #6e6c62) 0 6px / 100% 1px no-repeat;
	}

	.cmd {
		flex: none;
		height: 38px;
		display: flex;
		padding-left: 7px;
		background: #ece9d8;
	}

	.cgrip {
		width: 4px;
		height: 33px;
		margin-right: 5px;
		border-left: 1px solid #a8a594;
		border-right: 1px solid #a8a594;
	}

	.cbox {
		flex: 1;
		background: #fff;
		border-top: 2px solid #66645a;
		border-left: 1px solid #888;
		box-sizing: border-box;
	}

	.cline {
		position: relative;
		box-sizing: border-box;
		display: flex;
		align-items: center;
		white-space: pre;
		font-size: 14px;
		line-height: 16px;
		color: #333;
	}

	.hist {
		height: 16px;
		border-bottom: 1px solid #b0b0a8;
	}

	.prompt {
		height: 19px;
	}

	.cline .en {
		font: 11.500px "Liberation Mono", monospace;
		letter-spacing: 0.78px;
		white-space: pre;
	}

	.vscroll {
		position: absolute;
		right: 0;
		top: 0;
		width: 12px;
		height: 16px;
		display: flex;
		flex-direction: column;
		gap: 1px;
	}

	.vscroll i {
		flex: 1;
		background: #c9d8ee;
	}

	.hscroll {
		position: absolute;
		right: 15px;
		top: 1px;
		width: 60px;
		height: 15px;
		display: flex;
		gap: 2px;
	}

	.hscroll i {
		width: 13px;
		background: #c9d8ee;
		color: #2a4f86;
		font: bold 13px/13px "Liberation Sans", sans-serif;
		text-align: center;
	}

	.hscroll b {
		width: 13px;
		background: #d4e0f2;
	}

	.hscroll em {
		flex: 1;
	}

	.status {
		flex: none;
		height: 23px;
		display: flex;
		align-items: center;
		gap: 3.500px;
		padding-left: 5px;
		background: #ece9d8;
		font-size: 12px;
	}

	.coords {
		width: 177px;
		height: 18px;
		box-sizing: border-box;
		padding-left: 2px;
		border: 1px solid #d2cfbc;
		font: 9.200px/16px "Liberation Mono", monospace;
		color: #333;
	}

	.sb {
		height: 18px;
		flex: none;
		box-sizing: border-box;
		text-align: center;
		line-height: 16px;
		white-space: nowrap;
		border: 1px solid;
		border-color: #fbfaf2 #aca998 #aca998 #fbfaf2;
		overflow: hidden;
	}

	.sb.pressed {
		border-color: #333 #e6e4d4 #e6e4d4 #333;
	}

	.sb.latin {
		font: 9px/16px "Liberation Mono", monospace;
	}

	.w22 { width: 22px; }
	.w24 { width: 25px; }
	.w26 { width: 26px; }
	.w48 { width: 49px; }

	.tray {
		margin-left: auto;
		display: flex;
		align-items: center;
	}

	.tray svg {
		width: 58px;
		height: 20px;
		background: #e6e3d2;
		margin-right: 6px;
	}

	.tri {
		width: 0;
		height: 0;
		border: 4px solid transparent;
		border-top: 5px solid #111;
		border-bottom: 0;
		margin-right: 8px;
	}

	.sq {
		width: 10px;
		height: 14px;
		border: 1px solid #5577a4;
		background: #e0e8f3;
	}

	.taskbar {
		position: relative;
		flex: none;
		height: 21px;
		display: flex;
		align-items: center;
		background: linear-gradient(#3c7ae4, #2458d2 40%, #2252cc);
		color: #dfe8fa;
		overflow: hidden;
		font-size: 11px;
	}

	.start {
		flex: 0 0 89px;
		height: 21px;
		display: flex;
		align-items: center;
		gap: 7px;
		padding-left: 12px;
		box-sizing: border-box;
		background: linear-gradient(#5aa65a, #3c8a3c);
		border-radius: 0 10px 10px 0;
		color: #f0f6e8;
		font-size: 15px;
		font-style: italic;
		line-height: 20px;
	}

	.start svg {
		width: 16px;
		height: 16px;
		flex: none;
	}

	.quick {
		margin-left: 17px;
		width: 48px;
		height: 18px;
	}

	.quick svg {
		display: block;
		width: 48px;
		height: 18px;
	}

	.more {
		width: 41px;
		padding-left: 15px;
		box-sizing: border-box;
		color: #b8ccf0;
		line-height: 12px;
		align-self: flex-start;
	}

	.task {
		flex: 0 0 101px;
		height: 20px;
		margin-right: 2px;
		box-sizing: border-box;
		padding-left: 9px;
		display: flex;
		align-items: center;
		gap: 5px;
		background: #3a6fe0;
		border-radius: 2px;
		font: 10px "Liberation Mono", "Noto Sans CJK SC", monospace;
		overflow: hidden;
		white-space: nowrap;
	}

	.task.on {
		background: #1c48b8;
	}

	.task svg {
		width: 16px;
		height: 16px;
		flex: none;
	}

	.systray {
		flex: 1;
		min-width: 0;
		display: flex;
		align-items: center;
		padding-left: 9px;
		gap: 6px;
		height: 21px;
	}

	.kb {
		width: 17px;
		height: 14px;
		flex: none;
	}

	.hlp {
		width: 12px;
		height: 14px;
		flex: none;
		background: #fff;
		border: 1px solid #222;
		box-sizing: border-box;
		color: #222;
		text-align: center;
		font: bold 11px/12px "Liberation Sans", sans-serif;
	}

	.two {
		width: 10px;
		height: 18px;
		flex: none;
		margin-left: 2px;
	}

	.clock {
		flex: 1;
		align-self: stretch;
		display: flex;
		align-items: center;
		gap: 8px;
		margin-left: 8px;
		background: #3f93ea;
		font: 9.500px "Liberation Mono", monospace;
		white-space: nowrap;
	}

	.chev {
		width: 14px;
		height: 14px;
		flex: none;
		margin-left: -4px;
		border-radius: 50%;
		background: #dfeafa;
		color: #1f4fb8;
		text-align: center;
		font: bold 14px/12px "Liberation Sans", sans-serif;
	}
</style>
